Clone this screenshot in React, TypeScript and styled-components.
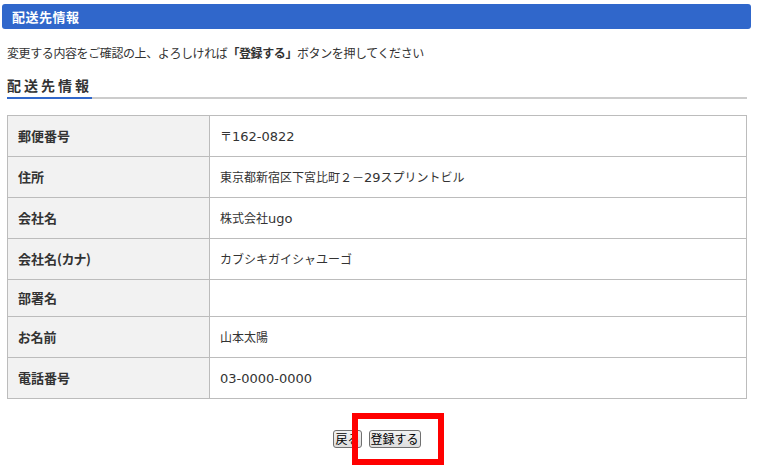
import React from "react";
import styled, { createGlobalStyle } from "styled-components";

const Global = createGlobalStyle`
  html, body { margin: 0; padding: 0; background: #fff; }
  body {
    font-family: "Noto Sans CJK JP", "Noto Sans", sans-serif;
    color: #333;
  }
`;

const Page = styled.div`
  padding: 4px 9px 24px 2px;
  width: 760px;
  min-height: 471px;
  box-sizing: border-box;
`;

const TitleBar = styled.div`
  height: 25px;
  background: #3067cb;
  border-radius: 3px;
  color: #fff;
  font-weight: bold;
  font-size: 13px;
  line-height: 25px;
  padding-left: 10px;
  letter-spacing: 0.5px;
`;

const Content = styled.div`
  margin: 0 4px 0 5px;
`;

const Lead = styled.p`
  margin: 17px 0 0;
  font-size: 12px;
  line-height: 14px;
  letter-spacing: -0.4px;
  strong { font-weight: bold; }
`;

const HeadingRow = styled.div`
  margin-top: 12px;
  border-bottom: 2px solid #cccccc;
`;

const Heading = styled.h2`
  display: inline-block;
  margin: 0 0 -2px;
  padding: 0 0 2px;
  font-size: 14px;
  line-height: 20px;
  font-weight: bold;
  letter-spacing: 3px;
  border-bottom: 2px solid #3067cb;
  width: 85px;
  box-sizing: border-box;
`;

const Table = styled.table`
  margin-top: 16px;
  width: 740px;
  border-collapse: collapse;
  border: 1px solid #bcbcbc;
`;

const Th = styled.th`
  width: 181px;
  background: #f2f2f2;
  border: 1px solid #bcbcbc;
  text-align: left;
  font-size: 13px;
  font-weight: bold;
  line-height: 16px;
  padding: 10px 10px;
  vertical-align: middle;
  color: #333;
  font-feature-settings: "palt";
`;

const Td = styled.td`
  border: 1px solid #bcbcbc;
  font-size: 12px;
  line-height: 20px;
  padding: 10px 10px;
  vertical-align: middle;
  color: #333;
`;

const Latin = styled.span`
  font-family: "DejaVu Sans", "Noto Sans CJK JP", sans-serif;
  font-size: 13px;
  line-height: 12px;
`;

const Actions = styled.div`
  margin-top: 31px;
  display: flex;
  align-items: flex-start;
  justify-content: center;
  gap: 7px;
`;

const ButtonWrap = styled.div`
  position: relative;
  display: flex;
`;

const Button = styled.button`
  height: 18px;
  margin: 0;
  padding: 0 1px;
  font-family: "Noto Sans CJK JP", sans-serif;
  font-size: 12px;
  line-height: 16px;
  color: #000;
  border: 1px solid #707070;
  border-radius: 3px;
  background: linear-gradient(#f2f2f2, #dedede);
  cursor: pointer;
`;

const Highlight = styled.div`
  position: absolute;
  left: -17px;
  top: -17px;
  width: 92px;
  height: 52px;
  border: 6px solid #ff0000;
  box-sizing: border-box;
  pointer-events: none;
`;

const rows: [string, string][] = [
  ["郵便番号", "〒162-0822"],
  ["住所", "東京都新宿区下宮比町２－29スプリントビル"],
  ["会社名", "株式会社ugo"],
  ["会社名(カナ)", "カブシキガイシャユーゴ"],
  ["部署名", ""],
  ["お名前", "山本太陽"],
  ["電話番号", "03-0000-0000"],
];

function Value({ text }: { text: string }) {
  const parts = text.match(/[\x20-\x7e]+|[^\x20-\x7e]+/g) || [];
  return (
    <>
      {parts.map((p, i) =>
        /^[\x20-\x7e]+$/.test(p) ? <Latin key={i}>{p}</Latin> : <React.Fragment key={i}>{p}</React.Fragment>
      )}
    </>
  );
}

export default function App() {
  return (
    <Page>
      <Global />
      <TitleBar>配送先情報</TitleBar>
      <Content>
        <Lead>
          変更する内容をご確認の上、よろしければ<strong>「登録する」</strong>ボタンを押してください
        </Lead>
        <HeadingRow>
          <Heading>配送先情報</Heading>
        </HeadingRow>
        <Table>
          <tbody>
            {rows.map(([k, v]) => (
              <tr key={k}>
                <Th>{k}</Th>
                <Td>
                  <Value text={v} />
                </Td>
              </tr>
            ))}
          </tbody>
        </Table>
        <Actions>
          <Button>戻る</Button>
          <ButtonWrap>
            <Button>登録する</Button>
            <Highlight />
          </ButtonWrap>
        </Actions>
      </Content>
    </Page>
  );
}
